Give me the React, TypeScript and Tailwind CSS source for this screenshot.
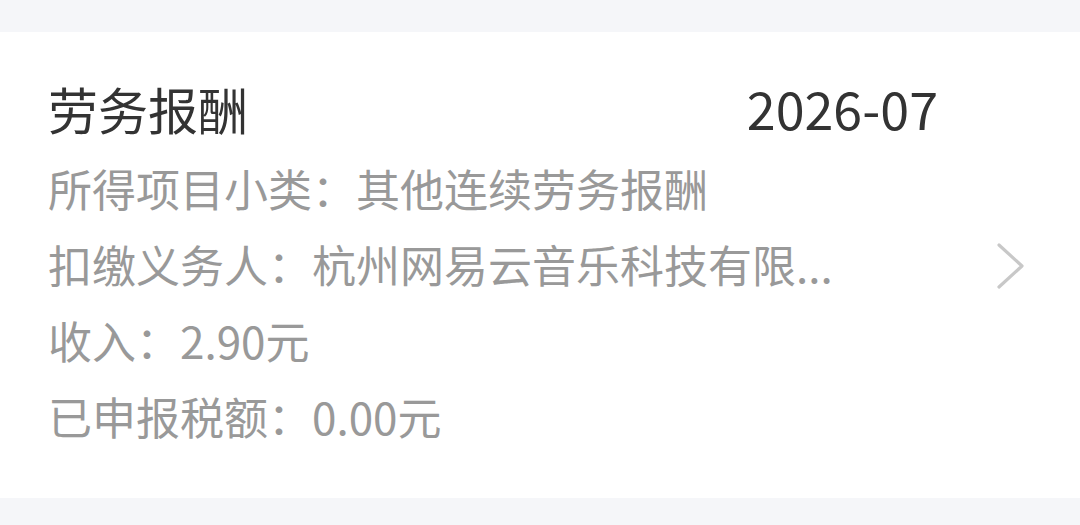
import React from "react";

const rows = [
    "所得项目小类：其他连续劳务报酬",
    "扣缴义务人：杭州网易云音乐科技有限...",
    "收入：2.90元",
    "已申报税额：0.00元",
];

export default function App() {
    return (
        <div
            className="w-[1080px] h-[525px] bg-[#f5f6f9] pt-[32px] overflow-hidden"
            style={{ fontFamily: '"Noto Sans CJK SC", "Noto Sans", sans-serif' }}
        >
            {/* Record card */}
            <div className="bg-white flex items-center pl-12 pr-[54px] pt-[46px] pb-[44px]">
                <div className="w-[892px]">
                    <div className="flex items-center justify-between h-[60px]">
                        <span className="text-[50px] leading-[60px] text-[#333333]">劳务报酬</span>
                        <span className="text-[52px] leading-[60px] text-[#333333] mr-[2px]">2026-07</span>
                    </div>
                    <div className="mt-[12px]">
                        {rows.map((r, i) => (
                            <div key={i} className="text-[44px] leading-[76px] text-[#999999] whitespace-nowrap">
                                {r}
                            </div>
                        ))}
                    </div>
                </div>
                <div className="flex-1 flex justify-end">
                    <svg width="30" height="48" viewBox="0 0 30 48" fill="none">
                        <polyline
                            points="3,3 26,24 3,45"
                            stroke="#c8c8c8"
                            strokeWidth="3.2"
                            strokeLinecap="round"
                            strokeLinejoin="round"
                        />
                    </svg>
                </div>
            </div>
        </div>
    );
}
